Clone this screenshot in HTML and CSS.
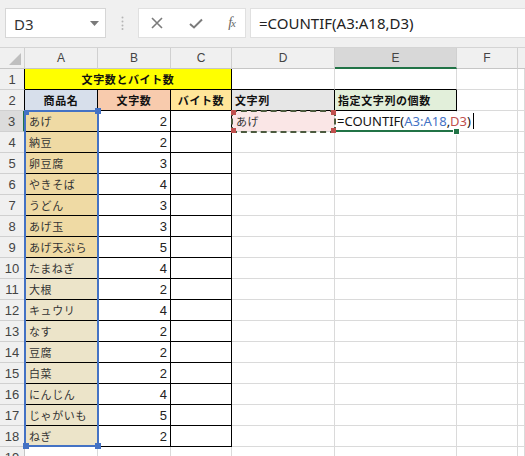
FILE: index.html
```html
<!DOCTYPE html>
<html lang="ja">
<head>
<meta charset="utf-8">
<link rel="stylesheet" href="styles.css">
</head>
<body>
<div class="toolbar">
  <div class="namebox">
    <span class="nb-text">D3</span>
    <svg class="caret" width="9" height="5" viewBox="0 0 9 5"><path d="M0 0 L9 0 L4.5 5 Z" fill="#7a7a7a"/></svg>
  </div>
  <div class="grip">
    <svg width="3" height="14" viewBox="0 0 3 14"><circle cx="1.5" cy="1.5" r="1" fill="#b5b5b5"/><circle cx="1.5" cy="5.5" r="1" fill="#b5b5b5"/><circle cx="1.5" cy="9.5" r="1" fill="#b5b5b5"/><circle cx="1.5" cy="13" r="1" fill="#b5b5b5"/></svg>
  </div>
  <div class="fxbtns">
    <svg class="ico" width="12" height="12" viewBox="0 0 12 12"><path d="M1 1 L11 11 M11 1 L1 11" stroke="#7b7b7b" stroke-width="1.6" fill="none"/></svg>
    <svg class="ico" width="14" height="11" viewBox="0 0 14 11"><path d="M1 6 L5 9.5 L13 1.5" stroke="#7b7b7b" stroke-width="2" fill="none"/></svg>
    <span class="fx"><i>f</i><i class="fxx">x</i></span>
  </div>
  <div class="formula">=COUNTIF(A3:A18,D3)</div>
</div>

<div class="sheet">
  <div class="c h corner"><svg width="12" height="12" viewBox="0 0 12 12"><path d="M12 0 L12 12 L0 12 Z" fill="#bfbfbf"/></svg></div>
  <div class="c h">A</div><div class="c h">B</div><div class="c h">C</div><div class="c h">D</div><div class="c h hsel">E</div><div class="c h">F</div><div class="c h hlast"></div>

  <div class="c rh rht">1</div><div class="c t title">文字数とバイト数</div><div class="c top"></div><div class="c top"></div><div class="c"></div><div class="c"></div>

  <div class="c rh rht">2</div><div class="c t th th-a">商品名</div><div class="c t th th-b">文字数</div><div class="c t th th-c">バイト数</div><div class="c t th th-d">文字列</div><div class="c t th th-e">指定文字列の個数</div><div class="c"></div><div class="c"></div>

  <div class="c rh rsel">3</div><div class="c t name n1">あげ</div><div class="c t num">2</div><div class="c t"></div><div class="c d3">あげ</div><div class="c e3"><span class="edit">=COUNTIF(<span class="ref-a">A3:A18</span>,<span class="ref-d">D3</span>)<span class="cursor"></span></span></div><div class="c"></div><div class="c"></div>

  <div class="c rh">4</div><div class="c t name n1">納豆</div><div class="c t num">2</div><div class="c t"></div><div class="c"></div><div class="c"></div><div class="c"></div><div class="c"></div>
  <div class="c rh">5</div><div class="c t name n1">卵豆腐</div><div class="c t num">3</div><div class="c t"></div><div class="c"></div><div class="c"></div><div class="c"></div><div class="c"></div>
  <div class="c rh">6</div><div class="c t name n1">やきそば</div><div class="c t num">4</div><div class="c t"></div><div class="c"></div><div class="c"></div><div class="c"></div><div class="c"></div>
  <div class="c rh">7</div><div class="c t name n1">うどん</div><div class="c t num">3</div><div class="c t"></div><div class="c"></div><div class="c"></div><div class="c"></div><div class="c"></div>
  <div class="c rh">8</div><div class="c t name n1">あげ玉</div><div class="c t num">3</div><div class="c t"></div><div class="c"></div><div class="c"></div><div class="c"></div><div class="c"></div>
  <div class="c rh">9</div><div class="c t name n1">あげ天ぷら</div><div class="c t num">5</div><div class="c t"></div><div class="c"></div><div class="c"></div><div class="c"></div><div class="c"></div>
  <div class="c rh">10</div><div class="c t name n2">たまねぎ</div><div class="c t num">4</div><div class="c t"></div><div class="c"></div><div class="c"></div><div class="c"></div><div class="c"></div>
  <div class="c rh">11</div><div class="c t name n2">大根</div><div class="c t num">2</div><div class="c t"></div><div class="c"></div><div class="c"></div><div class="c"></div><div class="c"></div>
  <div class="c rh">12</div><div class="c t name n2">キュウリ</div><div class="c t num">4</div><div class="c t"></div><div class="c"></div><div class="c"></div><div class="c"></div><div class="c"></div>
  <div class="c rh">13</div><div class="c t name n2">なす</div><div class="c t num">2</div><div class="c t"></div><div class="c"></div><div class="c"></div><div class="c"></div><div class="c"></div>
  <div class="c rh">14</div><div class="c t name n2">豆腐</div><div class="c t num">2</div><div class="c t"></div><div class="c"></div><div class="c"></div><div class="c"></div><div class="c"></div>
  <div class="c rh">15</div><div class="c t name n2">白菜</div><div class="c t num">2</div><div class="c t"></div><div class="c"></div><div class="c"></div><div class="c"></div><div class="c"></div>
  <div class="c rh">16</div><div class="c t name n2">にんじん</div><div class="c t num">4</div><div class="c t"></div><div class="c"></div><div class="c"></div><div class="c"></div><div class="c"></div>
  <div class="c rh">17</div><div class="c t name n2">じゃがいも</div><div class="c t num">5</div><div class="c t"></div><div class="c"></div><div class="c"></div><div class="c"></div><div class="c"></div>
  <div class="c rh">18</div><div class="c t name n2">ねぎ</div><div class="c t num">2</div><div class="c t"></div><div class="c"></div><div class="c"></div><div class="c"></div><div class="c"></div>
  <div class="c rh">19</div><div class="c"></div><div class="c"></div><div class="c"></div><div class="c"></div><div class="c"></div><div class="c"></div><div class="c"></div>

  <div class="range-a">
    <span class="hd hd-tl"></span><span class="hd hd-tr"></span><span class="hd hd-bl"></span><span class="hd hd-br"></span>
  </div>
  <div class="range-d">
    <span class="rd rd-tl"></span><span class="rd rd-tr"></span><span class="rd rd-bl"></span><span class="rd rd-br"></span>
  </div>
  <div class="active-e"><span class="fill-handle"></span></div>
</div>
</body>
</html>
```
FILE: styles.css
```css
html, body {
  margin: 0;
  padding: 0;
  width: 525px;
  height: 456px;
  overflow: hidden;
  background: #ffffff;
}

.toolbar {
  height: 48px;
  box-sizing: border-box;
  background: #f0f0f0;
  border-bottom: 1px solid #d4d4d4;
  display: flex;
  align-items: flex-start;
  padding-top: 8px;
  padding-left: 5px;
}

.namebox {
  width: 101px;
  height: 30px;
  box-sizing: border-box;
  background: #fff;
  border: 1px solid #d6d6d6;
  display: flex;
  align-items: center;
  justify-content: space-between;
  padding: 0 6px 0 8px;
}
.nb-text {
  font: 15px "Noto Sans", "Open Sans", sans-serif;
  color: #333;
  margin-top: 1px;
}
.caret { margin-top: 1px; }

.grip {
  width: 32px;
  height: 30px;
  display: flex;
  align-items: center;
  justify-content: center;
}

.fxbtns {
  width: 108px;
  height: 30px;
  box-sizing: border-box;
  background: #fff;
  border: 1px solid #e0e0e0;
  display: flex;
  align-items: center;
  justify-content: space-between;
  padding: 0 10px 0 12px;
}
.fx {
  font: italic 14px "Liberation Serif", "DejaVu Serif", serif;
  color: #666;
  letter-spacing: -1px;
}
.fxx { font-size: 11px; }

.formula {
  flex: 1;
  margin-left: 4px;
  height: 30px;
  box-sizing: border-box;
  background: #fff;
  border: 1px solid #e0e0e0;
  border-right: none;
  display: flex;
  align-items: center;
  padding-left: 8px;
  font: 15px "Noto Sans", "Open Sans", sans-serif;
  color: #222;
}

.sheet {
  position: relative;
  display: grid;
  grid-template-columns: 25px 73px 73px 61px 103px 122px 61px 7px;
  grid-auto-rows: 21px;
}

.c {
  box-sizing: border-box;
  border-right: 1px solid #dadada;
  border-bottom: 1px solid #dadada;
  display: flex;
  align-items: center;
  padding: 0 3px;
  white-space: nowrap;
  font: 11px "Noto Sans CJK JP", sans-serif;
  letter-spacing: 0.6px;
  color: #333;
  min-width: 0;
}

.h {
  background: #f0f0f0;
  justify-content: center;
  border-right-color: #d0d0d0;
  border-bottom-color: #c6c6c6;
  font: 12px "Liberation Sans", sans-serif;
  color: #444;
  letter-spacing: 0;
}
.corner { justify-content: flex-end; align-items: flex-end; padding: 0 3px 3px 0; }
.hsel {
  background: #d8d8d8;
  border-bottom: 2px solid #217346;
  padding-top: 1px;
}
.hlast { border-right: none; }

.rh {
  background: #f0f0f0;
  justify-content: center;
  border-right-color: #c6c6c6;
  border-bottom-color: #d0d0d0;
  font: 13px "Liberation Sans", sans-serif;
  color: #444;
  letter-spacing: 0;
  padding: 0;
}
.rht { border-right-color: #000; }
.rsel {
  background: #dcdcdc;
  border-right: 2px solid #217346;
}

.t {
  border-right-color: #000;
  border-bottom-color: #000;
}
.top { border-bottom-color: #000; }

.title {
  grid-column: span 3;
  background: #ffff00;
  justify-content: center;
  font-weight: bold;
  color: #111;
}

.th {
  font-weight: bold;
  color: #111;
  justify-content: center;
}
.th-a { background: #d7dfeb; }
.th-b { background: #f8cbad; }
.th-c { background: #ffe699; }
.th-d { background: #e6e6e6; justify-content: flex-start; }
.th-e { background: #e2efda; justify-content: flex-start; }

.name { padding-left: 4px; }
.n1 { background: #efdaa4; }
.n2 { background: #ece4c9; }

.num {
  justify-content: flex-end;
  font: 13px "Liberation Sans", sans-serif;
  letter-spacing: 0;
  color: #222;
  padding-right: 3px;
}

.d3 {
  background: #fae6e6;
  padding-left: 4px;
}

.e3 {
  overflow: visible;
  position: relative;
  z-index: 2;
  padding-left: 2px;
}
.edit {
  background: #fff;
  font: 13px "Noto Sans", "Open Sans", sans-serif;
  letter-spacing: 0;
  color: #111;
  display: flex;
  align-items: center;
  padding-right: 2px;
}
.ref-a { color: #4472c4; }
.ref-d { color: #c0504d; }
.cursor {
  display: inline-block;
  width: 1px;
  height: 16px;
  background: #000;
  margin-left: 2px;
}

.range-a {
  position: absolute;
  left: 24px;
  top: 62px;
  width: 75px;
  height: 337px;
  box-sizing: border-box;
  border: 2px solid #4472c4;
  z-index: 3;
}
.hd {
  position: absolute;
  width: 6px;
  height: 6px;
  background: #4472c4;
}
.hd-tl { left: -3px; top: -3px; width: 4px; height: 4px; left: -1px; top: -1px; }
.hd-tr { right: -4px; top: -4px; }
.hd-bl { left: -3px; bottom: -4px; }
.hd-br { right: -4px; bottom: -4px; }

.range-d {
  position: absolute;
  left: 231px;
  top: 62px;
  width: 105px;
  height: 23px;
  box-sizing: border-box;
  border: 2px dashed #4c5a3e;
  z-index: 4;
}
.rd {
  position: absolute;
  width: 5px;
  height: 5px;
  background: #c0504d;
}
.rd-tl { left: -2px; top: -2px; }
.rd-tr { right: -2px; top: -2px; }
.rd-bl { left: -2px; bottom: -2px; }
.rd-br { right: -2px; bottom: -2px; }

.active-e {
  position: absolute;
  left: 336px;
  top: 82px;
  width: 121px;
  height: 2px;
  background: #217346;
  z-index: 3;
}
.fill-handle {
  position: absolute;
  right: -3px;
  top: -2px;
  width: 5px;
  height: 5px;
  background: #217346;
  border: 1px solid #fff;
}
```
